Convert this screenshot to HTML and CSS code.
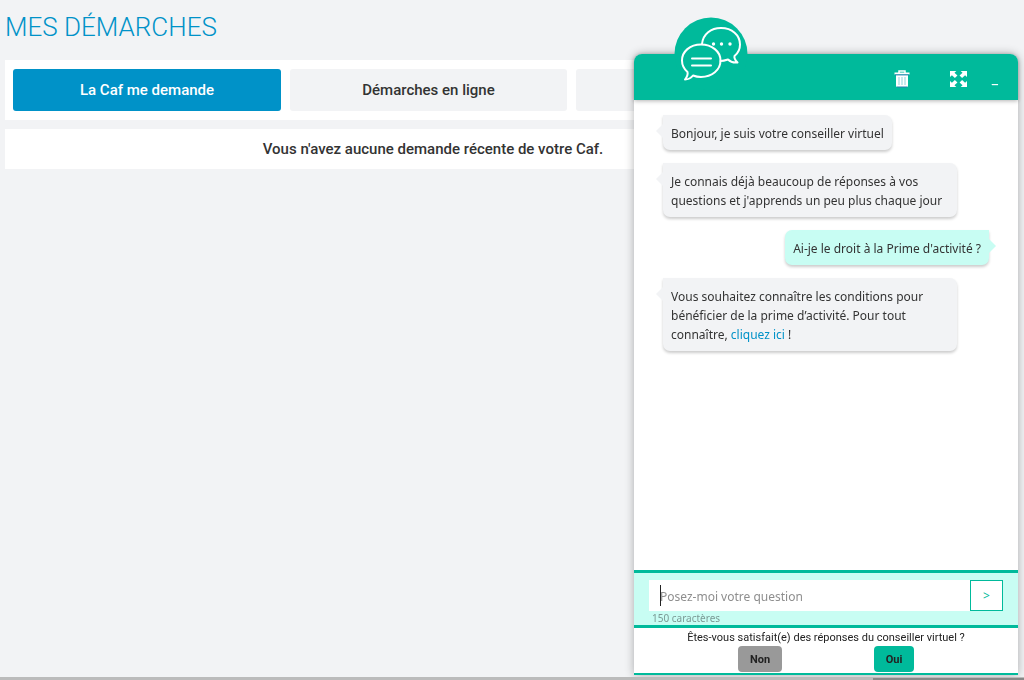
FILE: index.html
```
<!DOCTYPE html>
<html lang="fr">
<head>
<meta charset="utf-8">
<meta name="viewport" content="width=device-width, initial-scale=1">
<title>Mes démarches</title>
<link rel="stylesheet" href="styles.css">
</head>
<body>
<main class="page">
  <h1 class="title">MES DÉMARCHES</h1>
  <nav class="tabs">
    <button class="tab tab-active" type="button">La Caf me demande</button>
    <button class="tab" type="button">Démarches en ligne</button>
    <button class="tab" type="button" aria-label="Autres démarches"></button>
  </nav>
  <p class="notice">Vous n'avez aucune demande récente de votre Caf.</p>
</main>

<section class="chat" aria-label="Conseiller virtuel">
  <header class="chat-header">
    <div class="logo">
      <svg viewBox="0 0 74 74" width="74" height="74" fill="none" stroke="#fff" stroke-width="2" stroke-linejoin="round" stroke-linecap="round" aria-hidden="true">
        <circle cx="37" cy="37" r="36.500" fill="#00ba9b" stroke="none"/>
        <path d="M28 27C29 17 37 11 47 11C58 11 66 18 66 27.500C66 33 63 37 60.500 39C60 41 62 44 63.500 45.500C59 46 56 44.500 54 42.500C51 43.500 49 44 46.500 44"/>
        <path d="M27 27.500C38 27.500 46.500 34.500 46.500 43.500C46.500 53 38 60 27 60C24 60 21.500 59.500 19 58.500C17 61 14 62.500 11 62.500C13 60 14 57 13.500 55C10 52 8 48 8 43.500C8 34.500 16 27.500 27 27.500Z"/>
        <path d="M18 41.500H37M18 48.500H37"/>
        <g fill="#fff" stroke="none"><circle cx="39.500" cy="27" r="1.700"/><circle cx="47.500" cy="27" r="1.700"/><circle cx="56" cy="27" r="1.700"/></g>
      </svg>
    </div>
    <div class="tools">
      <button class="tool" type="button" aria-label="Supprimer">
        <svg viewBox="0 0 16 18" width="16" height="18" aria-hidden="true">
          <path d="M5 3V1H11V3" fill="none" stroke="#fff" stroke-width="1.500"/>
          <path d="M0.500 2.500H15.500V4.500H0.500ZM2 5H14V15.500Q14 17 12.500 17H3.500Q2 17 2 15.500Z" fill="#fff"/>
          <path d="M5 7V15M8 7V15M11 7V15" stroke="#8fd4dc"/><path d="M1 4.900H15M3 17H13" stroke="#287eb0"/>
        </svg>
      </button>
      <button class="tool" type="button" aria-label="Agrandir">
        <svg viewBox="0 0 16 16" width="17" height="16" preserveAspectRatio="none" fill="#fff" aria-hidden="true">
          <path d="M0 0H6L4.200 1.800L7 4.600L4.600 7L1.800 4.200L0 6ZM16 0V6L14.200 4.200L11.400 7L9 4.600L11.800 1.800L10 0ZM0 16V10L1.800 11.800L4.600 9L7 11.400L4.200 14.200L6 16ZM16 16H10L11.800 14.200L9 11.400L11.400 9L14.200 11.800L16 10Z"/>
        </svg>
      </button>
      <button class="tool tool-min" type="button" aria-label="Réduire">_</button>
    </div>
  </header>

  <div class="messages">
    <p class="bubble bot">Bonjour, je suis votre conseiller virtuel</p>
    <p class="bubble bot">Je connais déjà beaucoup de réponses à vos questions et j'apprends un peu plus chaque jour</p>
    <p class="bubble user">Ai-je le droit à la Prime d'activité ?</p>
    <p class="bubble bot">Vous souhaitez connaître les conditions pour bénéficier de la prime d’activité. Pour tout connaître, <a class="link" href="#">cliquez ici</a> !</p>
  </div>

  <form class="ask">
    <div class="ask-row">
      <input class="ask-input" id="question" type="text" placeholder="Posez-moi votre question" aria-label="Posez-moi votre question">
      <span class="caret"></span>
      <button class="send" type="button" aria-label="Envoyer">&gt;</button>
    </div>
    <label class="count" for="question">150 caractères</label>
  </form>

  <footer class="survey">
    <p class="survey-text">Êtes-vous satisfait(e) des réponses du conseiller virtuel ?</p>
    <div class="survey-actions">
      <button class="vote vote-no" type="button">Non</button>
      <button class="vote vote-yes" type="button">Oui</button>
    </div>
  </footer>
</section>
<div class="bottom-bar"><span class="bottom-thumb"></span></div>
</body>
</html>
```

FILE: styles.css
```
* { box-sizing: border-box; }

body {
  margin: 0;
  min-height: 100vh;
  background: #f2f3f5;
  color: #333;
  font-family: Roboto, "Liberation Sans", sans-serif;
}

button { font-family: inherit; border: 0; padding: 0; cursor: pointer; }

.page { max-width: 861px; padding: 9px 0 0 5px; }

.title {
  margin: 0 0 15px;
  font-size: 26px;
  line-height: 36px;
  font-weight: 300;
  color: #0092c8;
}

.tabs {
  display: grid;
  grid-template-columns: 268fr 277fr 277fr;
  gap: 9px;
  padding: 9px 8px;
  background: #fff;
}

.tab {
  height: 42px;
  border-radius: 3px;
  background: #f2f3f5;
  color: #333;
  font-size: 15px;
  font-weight: 500;
}

.tab-active { background: #0092c8; color: #fff; }

.notice {
  margin: 9px 0 0;
  padding: 10px;
  background: #fff;
  font-size: 15px;
  line-height: 20px;
  font-weight: 500;
  text-align: center;
}

.chat {
  position: fixed;
  top: 54px;
  right: 6px;
  bottom: 5px;
  width: 384px;
  display: flex;
  flex-direction: column;
  background: #fff;
  border-radius: 8px 8px 0 0;
  box-shadow: 0 0 10px rgba(0, 0, 0, 0.3);
}

.chat-header {
  position: relative;
  flex: none;
  height: 46px;
  background: #00ba9b;
  border-radius: 8px 8px 0 0;
  box-shadow: 0 1px 4px rgba(0, 0, 0, 0.3);
}

.logo { position: absolute; left: 40px; top: -37px; }
.logo svg { display: block; }

.tools {
  display: flex;
  justify-content: flex-end;
  align-items: center;
  gap: 40px;
  height: 100%;
  padding: 3px 20px 0 0;
}

.tool { display: flex; background: none; color: #fff; }
.tool-min { margin-left: -15px; font-size: 14px; line-height: 16px; }

.messages {
  flex: 1;
  min-height: 0;
  display: flex;
  flex-direction: column;
  align-items: flex-start;
  gap: 13px;
  padding: 15px 29px;
}

.bubble {
  position: relative;
  max-width: 294px;
  margin: 0;
  padding: 9px 8px 7px;
  border-radius: 7px;
  background: #f2f3f5;
  box-shadow: 0 2px 3px rgba(0, 0, 0, 0.2);
  font-family: "Noto Sans", "Open Sans", sans-serif;
  font-size: 12px;
  line-height: 19px;
}

.bubble::before {
  content: "";
  position: absolute;
  top: 8px;
  border: 8px solid transparent;
}

.bot { border-top-left-radius: 0; }
.bot::before { left: -7px; border-left-width: 0; border-right-color: #f2f3f5; }

.user { align-self: flex-end; border-top-right-radius: 0; background: #c8fdf3; }
.user::before { right: -7px; border-right-width: 0; border-left-color: #c8fdf3; }

.link { color: #0092c8; text-decoration: none; }

.ask {
  flex: none;
  padding: 7px 15px 0;
  background: #c8fdf3;
  border-top: 3px solid #00ba9b;
  border-bottom: 3px solid #00ba9b;
}

.ask-row { position: relative; display: flex; }

.ask-input {
  flex: 1;
  min-width: 0;
  height: 31px;
  padding: 1px 11px 0;
  border: 0;
  outline: 0;
  background: #fff;
  color: #333;
  font-family: "Noto Sans", "Open Sans", sans-serif;
  font-size: 12px;
}

.ask-input::placeholder { color: #8e8e8e; opacity: 1; }

.caret { position: absolute; left: 11px; top: 5px; width: 1px; height: 21px; background: #222; }

.send {
  width: 33px;
  height: 31px;
  border: 1px solid #00ba9b;
  background: #fff;
  color: #00ba9b;
  font-family: "Noto Sans", sans-serif;
  font-size: 12px;
}

.count {
  display: block;
  padding: 1px 3px 0;
  color: #7b9994;
  font-family: "Noto Sans", "Open Sans", sans-serif;
  font-size: 10px;
  line-height: 13px;
}

.survey { flex: none; padding: 2px 0 1px; border-bottom: 2px solid #00ba9b; }

.survey-text { margin: 0; font-size: 11px; line-height: 16px; text-align: center; color: #222; }

.survey-actions { display: flex; justify-content: space-between; padding: 0 104px; }

.vote {
  height: 26px;
  border-radius: 4px;
  color: #222;
  font-size: 11px;
  font-weight: 700;
}

.vote-no { width: 44px; background: #999; }
.vote-yes { width: 40px; background: #00ba9b; }

.bottom-bar {
  position: fixed;
  left: 0;
  right: 0;
  bottom: 0;
  height: 3px;
  display: flex;
  justify-content: flex-end;
  background: #bbb;
}

.bottom-thumb { width: 151px; margin-top: 1px; background: #888; }
```
